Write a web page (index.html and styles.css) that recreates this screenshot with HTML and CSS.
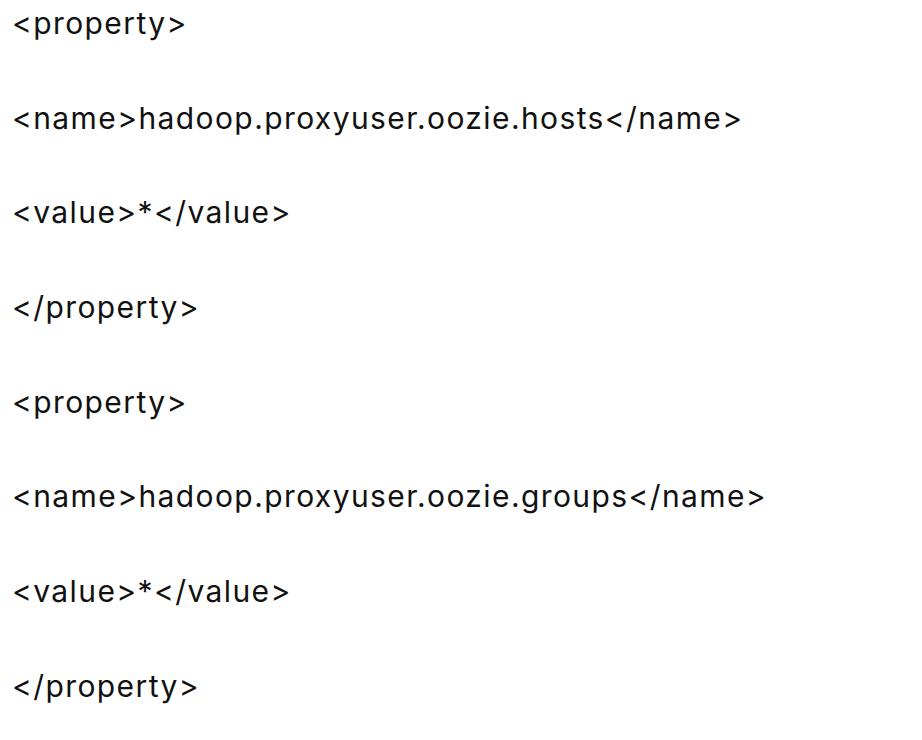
FILE: index.html
```html
<!DOCTYPE html>
<html>
<head>
<meta charset="utf-8">
<link rel="stylesheet" href="styles.css">
</head>
<body>
<div class="code">
<p class="line">&lt;property&gt;</p>
<p class="line">&lt;name&gt;hadoop.proxyuser.oozie.hosts&lt;/name&gt;</p>
<p class="line">&lt;value&gt;*&lt;/value&gt;</p>
<p class="line">&lt;/property&gt;</p>
<p class="line">&lt;property&gt;</p>
<p class="line">&lt;name&gt;hadoop.proxyuser.oozie.groups&lt;/name&gt;</p>
<p class="line">&lt;value&gt;*&lt;/value&gt;</p>
<p class="line">&lt;/property&gt;</p>
</div>
</body>
</html>
```
FILE: styles.css
```css
html, body {
  margin: 0;
  padding: 0;
  background: #ffffff;
}
.code {
  padding: 0 0 0 12px;
  font-family: Inter, "Noto Sans", sans-serif;
  font-size: 30px;
  letter-spacing: 1.4px;
  color: #111111;
}
.line {
  margin: 0;
  height: 94.7px;
  line-height: 46px;
  white-space: nowrap;
}
```
